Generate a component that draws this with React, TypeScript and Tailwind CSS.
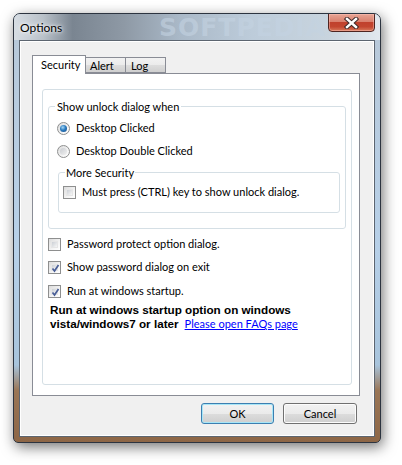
import React from "react";

function CheckBox({ checked }: { checked?: boolean }) {
  return (
    <span className="w-[13px] h-[13px] shrink-0 border border-[#8e8f8f] bg-[linear-gradient(135deg,#dcdcdc_0%,#f4f4f4_60%,#ffffff_100%)] p-[2px] flex items-center justify-center">
      <span className="w-full h-full border border-[#e6e6e6] bg-[linear-gradient(135deg,#cbcfd5_0%,#f6f6f6_100%)] relative">
        {checked && (
          <svg width="11" height="11" viewBox="0 0 11 11" className="absolute -left-[2px] -top-[2px]">
            <path d="M2.5 5.5 L4.5 8 L8.5 2" fill="none" stroke="#4a5f97" strokeWidth="1.7" />
          </svg>
        )}
      </span>
    </span>
  );
}

function Radio({ checked }: { checked?: boolean }) {
  return (
    <span className="w-[13px] h-[13px] shrink-0 rounded-full border border-[#8e8f8f] bg-[linear-gradient(135deg,#dcdcdc_0%,#f6f6f6_70%,#ffffff_100%)] flex items-center justify-center">
      {checked ? (
        <span className="w-[7px] h-[7px] rounded-full bg-[radial-gradient(circle_at_40%_35%,#a6d8f6_0%,#2b7bbf_45%,#174a87_100%)]" />
      ) : (
        <span className="w-[7px] h-[7px] rounded-full bg-[linear-gradient(135deg,#c9ccd1_0%,#f0f0f0_100%)]" />
      )}
    </span>
  );
}

export default function App() {
  return (
    <div className="w-[402px] h-[465px] bg-white pt-[13px] pl-[13px] font-[Lato] text-[11px] text-black">
      <div className="w-[368px] h-[430px] rounded-t-[7px] rounded-b-[5px] border border-[#2c3440] overflow-hidden flex flex-col shadow-[2px_4px_14px_rgba(0,0,0,0.55)] bg-[linear-gradient(180deg,#b8c8d8_0%,#b7d0e8_55%,#a8c4dc_82%,#9a7656_88%,#8d6646_100%)]">
        <div className="h-[26px] shrink-0 px-[5px] flex justify-between items-start relative bg-[linear-gradient(90deg,#d7dde3_0%,#b9c1c9_8%,#7a8591_16%,#8e99a5_30%,#a9b8c7_45%,#bdccda_65%,#c8d4de_86%,#e2e8ee_100%)]">
          <span className="absolute left-[145px] top-[1px] text-[25px] font-bold tracking-[1px] text-[#c4d3e2]/60 font-['DejaVu_Sans'] leading-[26px]">SOFTPEDIA</span>
          <span className="pl-[1px] pt-[6px] text-[12px] leading-[15px] relative [text-shadow:0_0_6px_#fff,0_0_3px_#fff]">Options</span>
          <div className="w-[47px] h-[19px] -mt-px rounded-b-[4px] border border-[#4e2420] relative shadow-[inset_0_0_0_1px_rgba(255,200,190,0.45)] bg-[linear-gradient(180deg,#e8a595_0%,#d9806e_45%,#c0412d_50%,#c34630_75%,#d87a5c_100%)] flex items-center justify-center">
            <svg width="15" height="12" viewBox="0 0 15 12">
              <path d="M3 2 L12 10 M12 2 L3 10" stroke="#3d2a2a" strokeWidth="4.4" strokeLinecap="square" />
              <path d="M3 2 L12 10 M12 2 L3 10" stroke="#ffffff" strokeWidth="2.4" strokeLinecap="square" />
            </svg>
          </div>
        </div>
        <div className="flex-1 px-[5px] pb-[5px] flex">
          <div className="flex-1 border border-[#5c6570] bg-[#f0f0f0] flex flex-col shadow-[inset_0_0_0_1px_#ffffff]">
            <div className="pl-[12px] pr-[14px] pt-[14px]">
              <div className="flex items-end h-[18px]">
                <div className="w-[54px] h-[19px] -mb-px border border-b-0 border-[#898c95] bg-white relative z-10 pl-[8px] leading-[17px]">Security</div>
                <div className="w-[40px] h-[16px] border border-l-0 border-[#898c95] bg-[linear-gradient(180deg,#f2f2f2_0%,#ebebeb_50%,#dddddd_51%,#cfcfcf_100%)] pl-[4px] leading-[15px]">Alert</div>
                <div className="w-[40px] h-[16px] border border-l-0 border-[#898c95] bg-[linear-gradient(180deg,#f2f2f2_0%,#ebebeb_50%,#dddddd_51%,#cfcfcf_100%)] pl-[5px] leading-[15px]">Log</div>
              </div>
              <div className="h-[323px] border border-[#898c95] bg-white pt-[15px] pl-[9px] pr-[7px] pb-[10px]">
                <div className="h-full border border-[#d5dfe5] rounded-[3px] px-[5px]">
                  <fieldset className="mt-[9px] border border-[#d5dfe5] rounded-[3px] pl-[8px] pr-[5px] pb-[15px]">
                    <legend className="-ml-[2px] px-[2px] leading-[15px]">Show unlock dialog when</legend>
                    <div className="pt-[3px]">
                      <div className="h-[23px] flex items-center gap-[6px]">
                        <Radio checked />
                        <span>Desktop Clicked</span>
                      </div>
                      <div className="h-[23px] flex items-center gap-[6px]">
                        <Radio />
                        <span>Desktop Double Clicked</span>
                      </div>
                    </div>
                    <fieldset className="mt-[2px] ml-[1px] border border-[#d5dfe5] rounded-[3px] pl-[4px] pb-[8px]">
                      <legend className="ml-[2px] px-[1px] leading-[15px]">More Security</legend>
                      <div className="mt-[1px] h-[23px] flex items-center gap-[6px]">
                        <CheckBox />
                        <span>Must press (CTRL) key to show unlock dialog.</span>
                      </div>
                    </fieldset>
                  </fieldset>
                  <div className="mt-[4px]">
                    <div className="h-[23px] flex items-center gap-[6px]">
                      <CheckBox />
                      <span>Password protect option dialog.</span>
                    </div>
                    <div className="h-[23px] flex items-center gap-[6px]">
                      <CheckBox checked />
                      <span>Show password dialog on exit</span>
                    </div>
                    <div className="mt-[1px] h-[23px] flex items-center gap-[6px]">
                      <CheckBox checked />
                      <span>Run at windows startup.</span>
                    </div>
                  </div>
                  <div className="pl-[2px] leading-[14px]">
                    <div className="font-bold font-['Liberation_Sans'] text-[11.7px]">Run at windows startup option on windows</div>
                    <div className="flex items-baseline gap-[6px]">
                      <span className="font-bold font-['Liberation_Sans'] text-[11.7px]">vista/windows7 or later</span>
                      <a className="text-[#0000ff] underline">Please open FAQs page</a>
                    </div>
                  </div>
                </div>
              </div>
            </div>
            <div className="flex justify-end gap-[9px] pr-[17px] pt-[7px]">
              <button className="w-[73px] h-[21px] rounded-[3px] border border-[#3c7fb1] shadow-[inset_0_0_0_1px_#a8e6f7] bg-[linear-gradient(180deg,#f2f2f2_0%,#ebebeb_50%,#dddddd_51%,#cfcfcf_100%)] leading-[19px]">OK</button>
              <button className="w-[74px] h-[21px] rounded-[3px] border border-[#707070] shadow-[inset_0_0_0_1px_#fcfcfc] bg-[linear-gradient(180deg,#f2f2f2_0%,#ebebeb_50%,#dddddd_51%,#cfcfcf_100%)] leading-[19px]">Cancel</button>
            </div>
          </div>
        </div>
      </div>
    </div>
  );
}
